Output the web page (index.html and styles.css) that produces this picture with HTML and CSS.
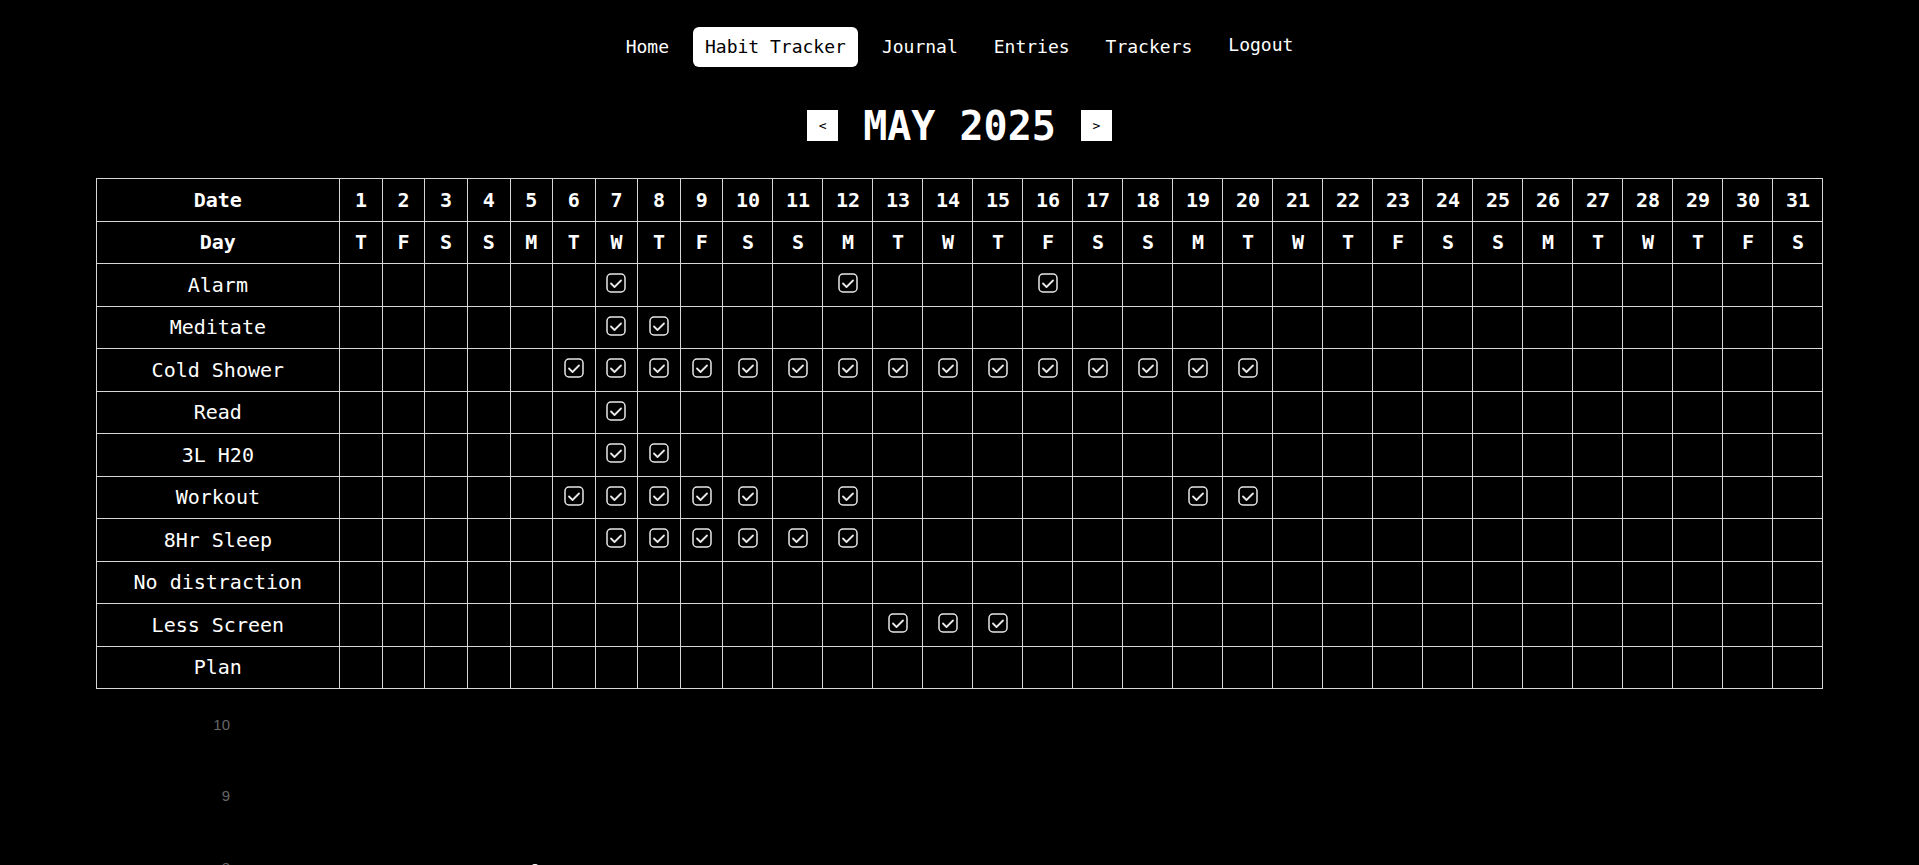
FILE: index.html
```html
<!DOCTYPE html>
<html lang="en">
<head>
<meta charset="utf-8">
<title>Habit Tracker</title>
<link rel="stylesheet" href="styles.css">
</head>
<body>
<svg class="defs" width="0" height="0" aria-hidden="true">
  <symbol id="i-chk" viewBox="0 0 24 24">
    <rect x="3" y="3" width="18" height="18" rx="4" fill="none" stroke="currentColor" stroke-width="1.5"/>
    <path d="M7 12.5 10.5 16 17 9.5" fill="none" stroke="currentColor" stroke-width="1.8" stroke-linecap="round" stroke-linejoin="round"/>
  </symbol>
</svg>

<nav class="nav">
  <a class="nav-link" href="#">Home</a>
  <a class="nav-link active" href="#">Habit Tracker</a>
  <a class="nav-link" href="#">Journal</a>
  <a class="nav-link" href="#">Entries</a>
  <a class="nav-link" href="#">Trackers</a>
  <button class="nav-link logout" type="button">Logout</button>
</nav>

<div class="month">
  <button class="month-btn" type="button">&lt;</button>
  <h1 class="month-title">MAY 2025</h1>
  <button class="month-btn" type="button">&gt;</button>
</div>

<table class="grid">
  <colgroup>
    <col class="c-label">
    <col class="c-s"><col class="c-s"><col class="c-s"><col class="c-s"><col class="c-s"><col class="c-s"><col class="c-s"><col class="c-s"><col class="c-s">
    <col class="c-d"><col class="c-d"><col class="c-d"><col class="c-d"><col class="c-d"><col class="c-d"><col class="c-d"><col class="c-d"><col class="c-d"><col class="c-d"><col class="c-d">
    <col class="c-d"><col class="c-d"><col class="c-d"><col class="c-d"><col class="c-d"><col class="c-d"><col class="c-d"><col class="c-d"><col class="c-d"><col class="c-d"><col class="c-d">
  </colgroup>
  <tr class="head">
    <th>Date</th>
    <th>1</th><th>2</th><th>3</th><th>4</th><th>5</th><th>6</th><th>7</th><th>8</th><th>9</th><th>10</th>
    <th>11</th><th>12</th><th>13</th><th>14</th><th>15</th><th>16</th><th>17</th><th>18</th><th>19</th><th>20</th>
    <th>21</th><th>22</th><th>23</th><th>24</th><th>25</th><th>26</th><th>27</th><th>28</th><th>29</th><th>30</th><th>31</th>
  </tr>
  <tr class="head">
    <th>Day</th>
    <th>T</th><th>F</th><th>S</th><th>S</th><th>M</th><th>T</th><th>W</th><th>T</th><th>F</th><th>S</th>
    <th>S</th><th>M</th><th>T</th><th>W</th><th>T</th><th>F</th><th>S</th><th>S</th><th>M</th><th>T</th>
    <th>W</th><th>T</th><th>F</th><th>S</th><th>S</th><th>M</th><th>T</th><th>W</th><th>T</th><th>F</th><th>S</th>
  </tr>
  <tr>
    <td class="habit">Alarm</td>
    <td></td><td></td><td></td><td></td><td></td><td></td>
    <td><svg class="chk"><use href="#i-chk"/></svg></td>
    <td></td><td></td><td></td><td></td>
    <td><svg class="chk"><use href="#i-chk"/></svg></td>
    <td></td><td></td><td></td>
    <td><svg class="chk"><use href="#i-chk"/></svg></td>
    <td></td><td></td><td></td><td></td><td></td><td></td><td></td><td></td><td></td><td></td><td></td><td></td><td></td><td></td><td></td>
  </tr>
  <tr>
    <td class="habit">Meditate</td>
    <td></td><td></td><td></td><td></td><td></td><td></td>
    <td><svg class="chk"><use href="#i-chk"/></svg></td>
    <td><svg class="chk"><use href="#i-chk"/></svg></td>
    <td></td><td></td><td></td><td></td><td></td><td></td><td></td><td></td><td></td><td></td><td></td><td></td><td></td><td></td>
    <td></td><td></td><td></td><td></td><td></td><td></td><td></td><td></td><td></td>
  </tr>
  <tr>
    <td class="habit">Cold Shower</td>
    <td></td><td></td><td></td><td></td><td></td>
    <td><svg class="chk"><use href="#i-chk"/></svg></td>
    <td><svg class="chk"><use href="#i-chk"/></svg></td>
    <td><svg class="chk"><use href="#i-chk"/></svg></td>
    <td><svg class="chk"><use href="#i-chk"/></svg></td>
    <td><svg class="chk"><use href="#i-chk"/></svg></td>
    <td><svg class="chk"><use href="#i-chk"/></svg></td>
    <td><svg class="chk"><use href="#i-chk"/></svg></td>
    <td><svg class="chk"><use href="#i-chk"/></svg></td>
    <td><svg class="chk"><use href="#i-chk"/></svg></td>
    <td><svg class="chk"><use href="#i-chk"/></svg></td>
    <td><svg class="chk"><use href="#i-chk"/></svg></td>
    <td><svg class="chk"><use href="#i-chk"/></svg></td>
    <td><svg class="chk"><use href="#i-chk"/></svg></td>
    <td><svg class="chk"><use href="#i-chk"/></svg></td>
    <td><svg class="chk"><use href="#i-chk"/></svg></td>
    <td></td><td></td><td></td><td></td><td></td><td></td><td></td><td></td><td></td><td></td><td></td>
  </tr>
  <tr>
    <td class="habit">Read</td>
    <td></td><td></td><td></td><td></td><td></td><td></td>
    <td><svg class="chk"><use href="#i-chk"/></svg></td>
    <td></td><td></td><td></td><td></td><td></td><td></td><td></td><td></td><td></td><td></td><td></td><td></td><td></td><td></td><td></td>
    <td></td><td></td><td></td><td></td><td></td><td></td><td></td><td></td><td></td>
  </tr>
  <tr>
    <td class="habit">3L H20</td>
    <td></td><td></td><td></td><td></td><td></td><td></td>
    <td><svg class="chk"><use href="#i-chk"/></svg></td>
    <td><svg class="chk"><use href="#i-chk"/></svg></td>
    <td></td><td></td><td></td><td></td><td></td><td></td><td></td><td></td><td></td><td></td><td></td><td></td><td></td><td></td>
    <td></td><td></td><td></td><td></td><td></td><td></td><td></td><td></td><td></td>
  </tr>
  <tr>
    <td class="habit">Workout</td>
    <td></td><td></td><td></td><td></td><td></td>
    <td><svg class="chk"><use href="#i-chk"/></svg></td>
    <td><svg class="chk"><use href="#i-chk"/></svg></td>
    <td><svg class="chk"><use href="#i-chk"/></svg></td>
    <td><svg class="chk"><use href="#i-chk"/></svg></td>
    <td><svg class="chk"><use href="#i-chk"/></svg></td>
    <td></td>
    <td><svg class="chk"><use href="#i-chk"/></svg></td>
    <td></td><td></td><td></td><td></td><td></td><td></td>
    <td><svg class="chk"><use href="#i-chk"/></svg></td>
    <td><svg class="chk"><use href="#i-chk"/></svg></td>
    <td></td><td></td><td></td><td></td><td></td><td></td><td></td><td></td><td></td><td></td><td></td>
  </tr>
  <tr>
    <td class="habit">8Hr Sleep</td>
    <td></td><td></td><td></td><td></td><td></td><td></td>
    <td><svg class="chk"><use href="#i-chk"/></svg></td>
    <td><svg class="chk"><use href="#i-chk"/></svg></td>
    <td><svg class="chk"><use href="#i-chk"/></svg></td>
    <td><svg class="chk"><use href="#i-chk"/></svg></td>
    <td><svg class="chk"><use href="#i-chk"/></svg></td>
    <td><svg class="chk"><use href="#i-chk"/></svg></td>
    <td></td><td></td><td></td><td></td><td></td><td></td><td></td><td></td>
    <td></td><td></td><td></td><td></td><td></td><td></td><td></td><td></td><td></td><td></td><td></td>
  </tr>
  <tr>
    <td class="habit">No distraction</td>
    <td></td><td></td><td></td><td></td><td></td><td></td><td></td><td></td><td></td><td></td>
    <td></td><td></td><td></td><td></td><td></td><td></td><td></td><td></td><td></td><td></td>
    <td></td><td></td><td></td><td></td><td></td><td></td><td></td><td></td><td></td><td></td><td></td>
  </tr>
  <tr>
    <td class="habit">Less Screen</td>
    <td></td><td></td><td></td><td></td><td></td><td></td><td></td><td></td><td></td><td></td>
    <td></td><td></td>
    <td><svg class="chk"><use href="#i-chk"/></svg></td>
    <td><svg class="chk"><use href="#i-chk"/></svg></td>
    <td><svg class="chk"><use href="#i-chk"/></svg></td>
    <td></td><td></td><td></td><td></td><td></td>
    <td></td><td></td><td></td><td></td><td></td><td></td><td></td><td></td><td></td><td></td><td></td>
  </tr>
  <tr>
    <td class="habit">Plan</td>
    <td></td><td></td><td></td><td></td><td></td><td></td><td></td><td></td><td></td><td></td>
    <td></td><td></td><td></td><td></td><td></td><td></td><td></td><td></td><td></td><td></td>
    <td></td><td></td><td></td><td></td><td></td><td></td><td></td><td></td><td></td><td></td><td></td>
  </tr>
</table>

<div class="chart">
  <svg class="chart-svg" width="1727" height="200">
    <g class="axis-y">
      <text x="134" y="37">10</text>
      <text x="134" y="108.5">9</text>
      <text x="134" y="180">8</text>
    </g>
    <circle class="pt" cx="439" cy="180" r="4"/>
  </svg>
</div>
</body>
</html>
```

FILE: styles.css
```css
html, body {
  margin: 0;
  padding: 0;
  background: #000;
  color: #fff;
  font-family: "DejaVu Sans Mono", "Liberation Mono", monospace;
}

.defs {
  position: absolute;
  width: 0;
  height: 0;
  overflow: hidden;
}

/* ---------- nav ---------- */
.nav {
  display: flex;
  justify-content: center;
  align-items: center;
  gap: 12px;
  padding-top: 25px;
}

.nav-link {
  display: block;
  height: 40px;
  line-height: 40px;
  padding: 0 12px;
  border: 0;
  border-radius: 6px;
  background: transparent;
  color: #fff;
  font-family: inherit;
  font-size: 18px;
  text-decoration: none;
  cursor: pointer;
}

.nav-link.active {
  background: #fff;
  color: #000;
}

.nav-link.logout {
  margin-bottom: 3px;
}

/* ---------- month header ---------- */
.month {
  display: flex;
  justify-content: center;
  align-items: center;
  gap: 25px;
  height: 31px;
  margin: 42px 0 37px;
}

.month-btn {
  width: 31px;
  height: 31px;
  padding: 0;
  border: 0;
  background: #fff;
  color: #000;
  font-family: inherit;
  font-size: 13px;
  cursor: pointer;
}

.month-title {
  margin: 0;
  font-size: 40px;
  line-height: 31px;
  font-weight: bold;
  padding-top: 2px;
}

/* ---------- grid ---------- */
.grid {
  width: 90%;
  margin: 0 auto;
  border-collapse: collapse;
  table-layout: fixed;
}

.c-label { width: 243.6px; }
.c-s { width: 42.6px; }
.c-d { width: 50px; }

.grid th,
.grid td {
  height: 41.5px;
  padding: 0;
  border: 1px solid #d6d6d6;
  text-align: center;
  vertical-align: middle;
  font-size: 20px;
}

.grid th {
  font-weight: bold;
}

.grid td.habit {
  font-weight: normal;
}

.chk {
  display: block;
  width: 24px;
  height: 24px;
  margin: -3px auto 0;
  color: #e8e8e8;
}

/* ---------- chart ---------- */
.chart {
  width: 90%;
  margin: 0 auto;
}

.chart-svg {
  display: block;
}

.axis-y text {
  fill: #666;
  font-family: "Liberation Sans", Arial, sans-serif;
  font-size: 15px;
  text-anchor: end;
  dominant-baseline: middle;
}

.pt {
  fill: #000;
  stroke: #fff;
  stroke-width: 2;
}
```
